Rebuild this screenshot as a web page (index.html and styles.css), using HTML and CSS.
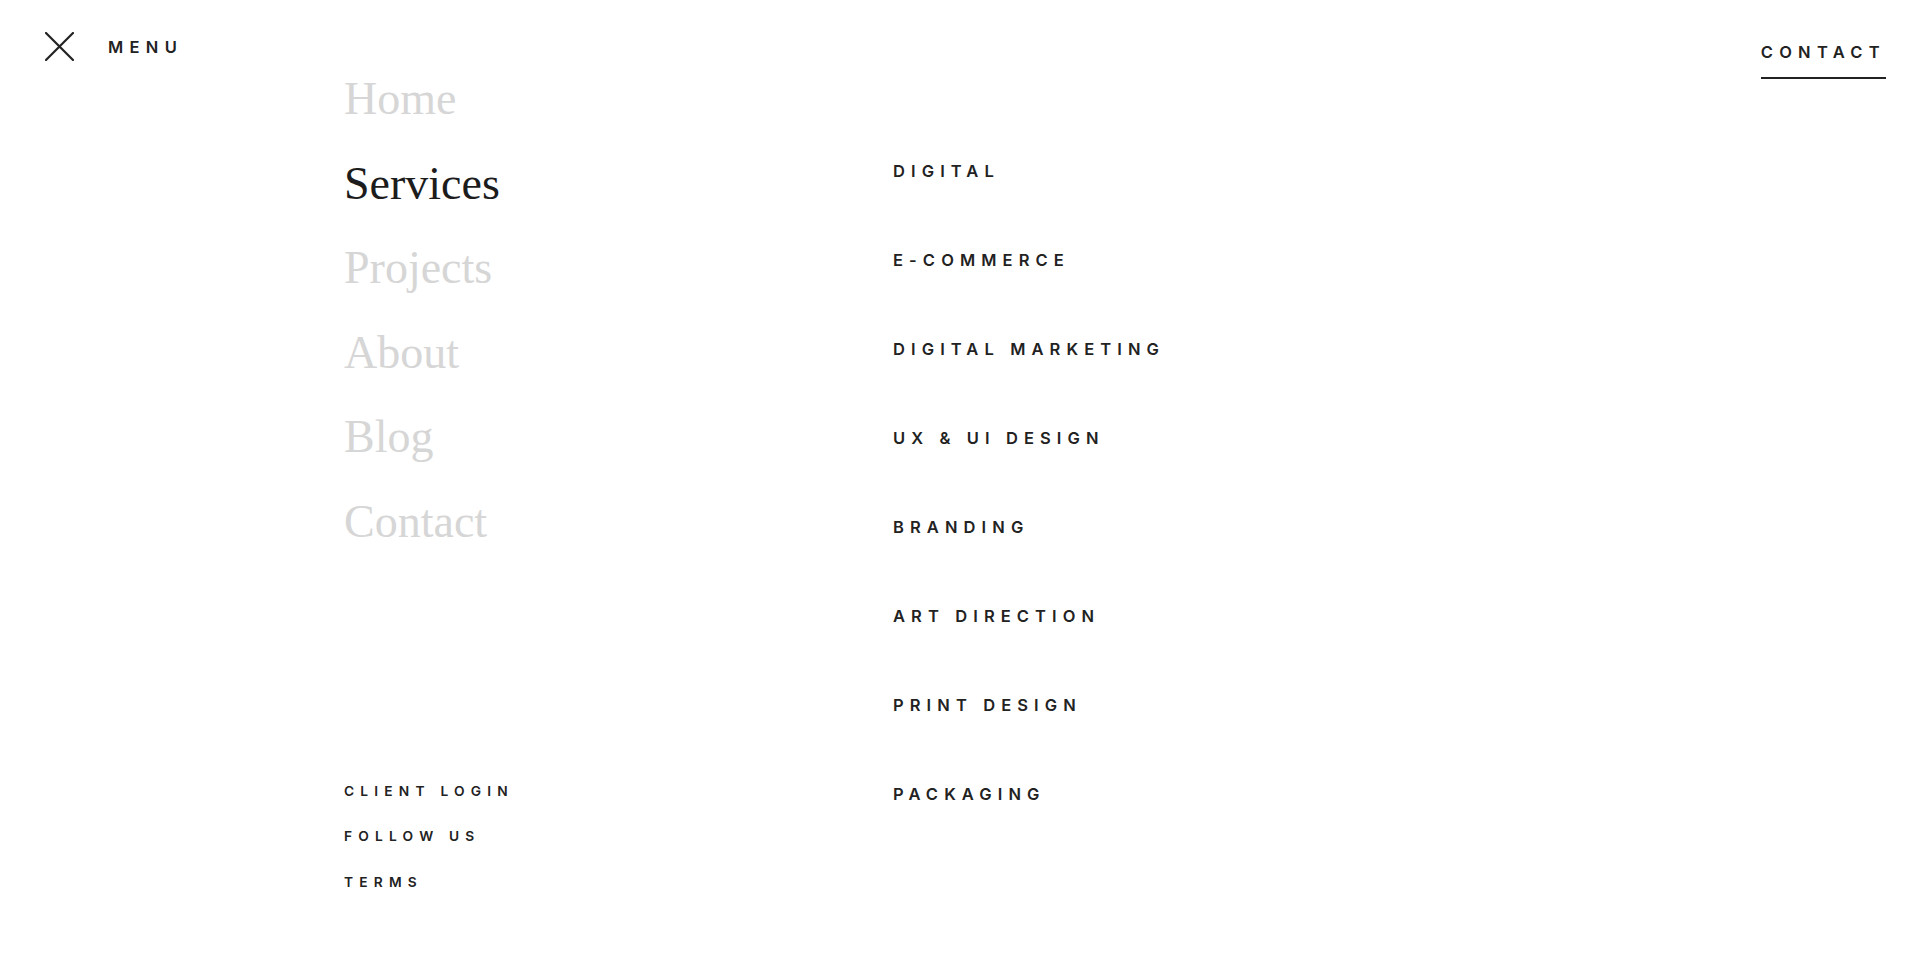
FILE: index.html
```html
<!DOCTYPE html>
<html lang="en">
<head>
<meta charset="utf-8">
<title>Menu</title>
<link rel="stylesheet" href="styles.css">
</head>
<body>
<header class="topbar">
  <div class="menu-toggle">
    <svg class="close-icon" width="29" height="29" viewBox="0 0 29 29" aria-hidden="true">
      <path d="M1 1 L28 28 M28 1 L1 28" stroke="#222" stroke-width="2.2" fill="none" stroke-linecap="round"/>
    </svg>
    <span class="menu-label">MENU</span>
  </div>
  <a class="contact-link" href="#">CONTACT</a>
</header>
<main class="overlay">
  <div class="primary">
    <ul class="main-nav">
      <li><a href="#">Home</a></li>
      <li class="active"><a href="#">Services</a></li>
      <li><a href="#">Projects</a></li>
      <li><a href="#">About</a></li>
      <li><a href="#">Blog</a></li>
      <li><a href="#">Contact</a></li>
    </ul>
    <ul class="footer-nav">
      <li><a href="#">CLIENT LOGIN</a></li>
      <li><a href="#">FOLLOW US</a></li>
      <li><a href="#">TERMS</a></li>
    </ul>
  </div>
  <ul class="sub-nav">
    <li><a href="#">DIGITAL</a></li>
    <li><a href="#">E-COMMERCE</a></li>
    <li><a href="#">DIGITAL MARKETING</a></li>
    <li><a href="#">UX &amp; UI DESIGN</a></li>
    <li><a href="#">BRANDING</a></li>
    <li><a href="#">ART DIRECTION</a></li>
    <li><a href="#">PRINT DESIGN</a></li>
    <li><a href="#">PACKAGING</a></li>
  </ul>
</main>
</body>
</html>
```

FILE: styles.css
```css
* { box-sizing: border-box; }
html, body { margin: 0; padding: 0; background: #fff; }
body {
  width: 1920px;
  height: 964px;
  overflow: hidden;
  font-family: "Inter", "Liberation Sans", sans-serif;
  color: #222;
}
ul { list-style: none; margin: 0; padding: 0; }
a { color: inherit; text-decoration: none; }

.topbar {
  height: 57px;
  display: flex;
  justify-content: space-between;
  align-items: flex-start;
  padding: 32px 34px 0 45px;
}
.menu-toggle {
  display: flex;
  align-items: center;
  gap: 34px;
}
.close-icon { display: block; }
.menu-label {
  font-size: 16.5px;
  font-weight: 600;
  letter-spacing: 6.3px;
  line-height: 20px;
}
.contact-link {
  display: block;
  font-size: 16.5px;
  font-weight: 600;
  letter-spacing: 6.3px;
  line-height: 20px;
  margin-top: 10px;
  padding-bottom: 15px;
  border-bottom: 2px solid #222;
}

.overlay {
  display: grid;
  grid-template-columns: 549px 1fr;
  padding-left: 344px;
}
.main-nav li {
  font-family: "Liberation Serif", "Times New Roman", serif;
  font-size: 46px;
  line-height: 84.6px;
  color: #d6d6d6;
}
.main-nav li.active { color: #1c1c1c; }

.footer-nav { margin-top: 204px; }
.footer-nav li {
  font-size: 13.75px;
  font-weight: 600;
  letter-spacing: 6.2px;
  line-height: 45.5px;
}

.sub-nav { padding-top: 70px; }
.sub-nav li {
  font-size: 16.5px;
  font-weight: 600;
  letter-spacing: 6.1px;
  line-height: 89px;
}
```
